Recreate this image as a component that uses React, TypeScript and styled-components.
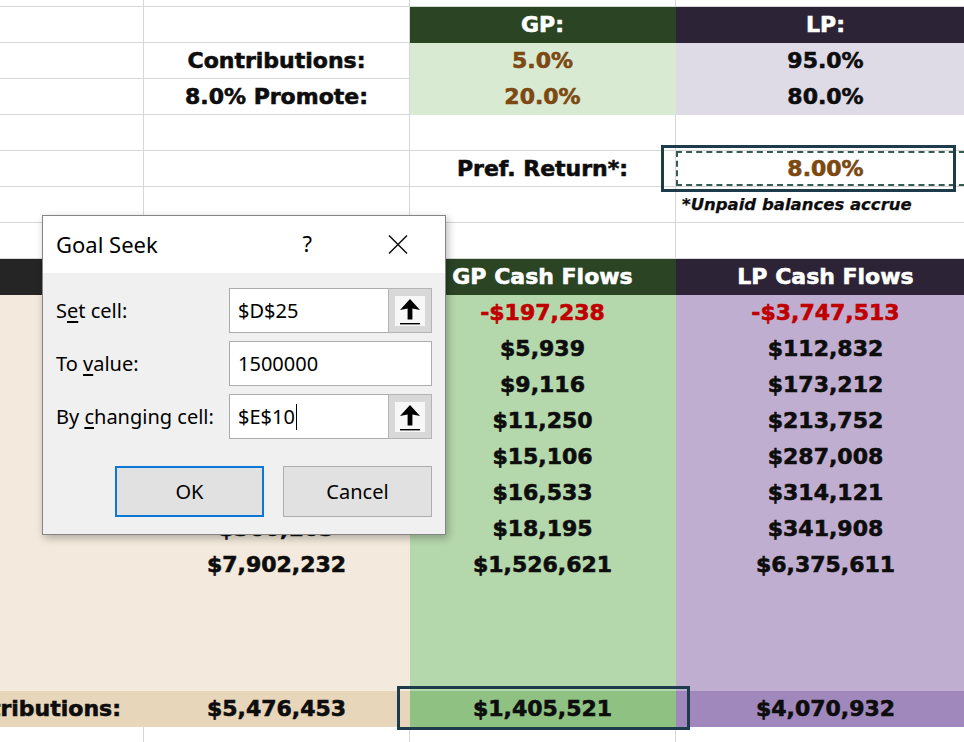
import React from 'react'
import styled, { createGlobalStyle } from 'styled-components'

const GlobalStyle = createGlobalStyle`
  html, body {
    margin: 0;
    padding: 0;
    background: #fff;
    overflow: hidden;
  }
`

type Fill =
  | 'none'
  | 'gpHead'
  | 'lpHead'
  | 'darkHead'
  | 'gpLight'
  | 'lpLight'
  | 'beige'
  | 'gp'
  | 'lp'
  | 'beigeTotal'
  | 'gpTotal'
  | 'lpTotal'

type Tone = 'dark' | 'light' | 'brown' | 'red'

const fills: Record<Fill, string> = {
  none: '#ffffff',
  gpHead: '#2a4424',
  lpHead: '#2c2337',
  darkHead: '#252525',
  gpLight: '#d9ead3',
  lpLight: '#dedae6',
  beige: '#f3e9dc',
  gp: '#b5d7ac',
  lp: '#bfaecf',
  beigeTotal: '#e8d6bb',
  gpTotal: '#8fc282',
  lpTotal: '#a088bc',
}

const tones: Record<Tone, string> = {
  dark: '#0d0d0d',
  light: '#ffffff',
  brown: '#7c4912',
  red: '#c00000',
}

interface ICell {
  text?: string
  fill?: Fill
  tone?: Tone
  align?: 'center' | 'left' | 'right'
  note?: boolean
  marquee?: boolean
  boxed?: 'pref' | 'total'
}

const blank: ICell = {}

// one entry per sheet row, columns A..D
const rows: ICell[][] = [
  [blank, blank, blank, blank],
  [blank, blank, { text: 'GP:', fill: 'gpHead', tone: 'light' }, { text: 'LP:', fill: 'lpHead', tone: 'light' }],
  [blank, { text: 'Contributions:' }, { text: '5.0%', fill: 'gpLight', tone: 'brown' }, { text: '95.0%', fill: 'lpLight' }],
  [blank, { text: '8.0% Promote:' }, { text: '20.0%', fill: 'gpLight', tone: 'brown' }, { text: '80.0%', fill: 'lpLight' }],
  [blank, blank, blank, blank],
  [blank, blank, { text: 'Pref. Return*:' }, { text: '8.00%', tone: 'brown', marquee: true, boxed: 'pref' }],
  [blank, blank, blank, { text: '*Unpaid balances accrue', align: 'left', note: true }],
  [blank, blank, blank, blank],
  [
    { fill: 'darkHead' },
    { fill: 'darkHead' },
    { text: 'GP Cash Flows', fill: 'gpHead', tone: 'light' },
    { text: 'LP Cash Flows', fill: 'lpHead', tone: 'light' },
  ],
]

// totals column B is hidden behind the dialog except for the last two rows
const flows: [string, string, string][] = [
  ['', '-$197,238', '-$3,747,513'],
  ['', '$5,939', '$112,832'],
  ['', '$9,116', '$173,212'],
  ['', '$11,250', '$213,752'],
  ['', '$15,106', '$287,008'],
  ['', '$16,533', '$314,121'],
  ['$360,103', '$18,195', '$341,908'],
  ['$7,902,232', '$1,526,621', '$6,375,611'],
]

flows.forEach(([total, gp, lp]) => {
  const tone: Tone = gp.startsWith('-') ? 'red' : 'dark'
  rows.push([
    { fill: 'beige' },
    { text: total, fill: 'beige', tone },
    { text: gp, fill: 'gp', tone },
    { text: lp, fill: 'lp', tone },
  ])
})

for (let i = 0; i < 3; i++) {
  rows.push([{ fill: 'beige' }, { fill: 'beige' }, { fill: 'gp' }, { fill: 'lp' }])
}

rows.push([
  { text: 'Total Distributions:', fill: 'beigeTotal', align: 'right' },
  { text: '$5,476,453', fill: 'beigeTotal' },
  { text: '$1,405,521', fill: 'gpTotal', boxed: 'total' },
  { text: '$4,070,932', fill: 'lpTotal' },
])
rows.push([blank, blank, blank, blank])

const App = (): JSX.Element => {
  return (
    <Page>
      <GlobalStyle />
      <Sheet>
        {rows.map((row, r) => (
          <Row key={r}>
            {row.map((cell, c) => {
              const fill = cell.fill ?? 'none'
              return (
                <Cell
                  key={c}
                  $fill={fills[fill]}
                  $lined={fill === 'none'}
                  $tone={tones[cell.tone ?? 'dark']}
                  $align={cell.align ?? 'center'}
                  $note={!!cell.note}>
                  {cell.text}
                  {cell.marquee && <Marquee />}
                  {cell.boxed && <Callout $kind={cell.boxed} />}
                </Cell>
              )
            })}
          </Row>
        ))}
      </Sheet>
      <GoalSeek />
    </Page>
  )
}

export default App

const Page = styled.div`
  position: relative;
  width: 964px;
  height: 742px;
  overflow: hidden;
  background: #fff;
`

const Sheet = styled.div`
  margin-top: -29px;
  width: 976px;
`

const Row = styled.div`
  display: grid;
  grid-template-columns: 144px 266px 266px 300px;
  height: 36px;
`

const Cell = styled.div<{ $fill: string; $lined: boolean; $tone: string; $align: string; $note: boolean }>`
  position: relative;
  box-sizing: border-box;
  display: flex;
  align-items: center;
  justify-content: ${({ $align }) =>
    $align === 'left' ? 'flex-start' : $align === 'right' ? 'flex-end' : 'center'};
  padding: ${({ $align }) => ($align === 'left' ? '0 0 0 6px' : $align === 'right' ? '0 22px 0 0' : '0')};
  background: ${({ $fill }) => $fill};
  border-right: 1px solid ${({ $lined }) => ($lined ? '#d6d6d6' : 'transparent')};
  border-bottom: 1px solid ${({ $lined }) => ($lined ? '#d6d6d6' : 'transparent')};
  white-space: nowrap;

  font-family: 'DejaVu Sans', 'Liberation Sans', sans-serif;
  font-weight: 700;
  font-size: ${({ $note }) => ($note ? '16.5px' : '22px')};
  font-style: ${({ $note }) => ($note ? 'italic' : 'normal')};
  color: ${({ $tone }) => $tone};
  -webkit-text-stroke: ${({ $note }) => ($note ? '0.25px' : '0.6px')} currentColor;
`

const Marquee = styled.div`
  position: absolute;
  inset: 0;
  border: 2px dashed #355d50;
  pointer-events: none;
`

const Callout = styled.div<{ $kind: 'pref' | 'total' }>`
  position: absolute;
  z-index: 2;
  box-sizing: border-box;
  border: 3px solid #1d3b4b;
  left: ${({ $kind }) => ($kind === 'pref' ? '-15px' : '-13px')};
  top: ${({ $kind }) => ($kind === 'pref' ? '-6px' : '-5px')};
  width: ${({ $kind }) => ($kind === 'pref' ? '295px' : '293px')};
  height: ${({ $kind }) => ($kind === 'pref' ? '47px' : '44px')};
`

/* ---------- Goal Seek dialog ---------- */

const GoalSeek = (): JSX.Element => {
  return (
    <Dialog>
      <TitleBar>
        <Title>Goal Seek</Title>
        <Help>?</Help>
        <svg width="20" height="19" viewBox="0 0 20 19">
          <path d="M1 0.5 L19 18.5 M19 0.5 L1 18.5" stroke="#111" strokeWidth="1.5" fill="none" />
        </svg>
      </TitleBar>
      <Body>
        <Form>
          <Label>S<u>e</u>t cell:</Label>
          <Field>
            <FieldText>$D$25</FieldText>
            <RefButton>
              <RefFace>
                <CollapseArrow />
              </RefFace>
            </RefButton>
          </Field>

          <Label>To <u>v</u>alue:</Label>
          <Field>
            <FieldText>1500000</FieldText>
          </Field>

          <Label>By <u>c</u>hanging cell:</Label>
          <Field>
            <FieldText>
              $E$10<Caret />
            </FieldText>
            <RefButton>
              <RefFace>
                <CollapseArrow />
              </RefFace>
            </RefButton>
          </Field>
        </Form>
        <Actions>
          <ActionButton $focused>OK</ActionButton>
          <ActionButton>Cancel</ActionButton>
        </Actions>
      </Body>
    </Dialog>
  )
}

const CollapseArrow = (): JSX.Element => (
  <svg width="30" height="30" viewBox="0 0 30 30">
    <path d="M15 3 L5 14 L12.6 12.4 L12.6 23.5 L17.4 23.5 L17.4 12.4 L25 14 Z" fill="#000" />
    <rect x="5" y="27" width="20" height="1.4" fill="#000" />
  </svg>
)

const Dialog = styled.div`
  position: absolute;
  z-index: 10;
  left: 42px;
  top: 215px;
  width: 404px;
  box-sizing: border-box;
  border: 1px solid #858585;
  background: #f0f0f0;
  box-shadow: 2px 3px 8px rgba(0, 0, 0, 0.28);
  font-family: 'Noto Sans', 'Open Sans', sans-serif;
  color: #000;
`

const TitleBar = styled.div`
  display: flex;
  align-items: center;
  height: 57px;
  padding: 0 37px 0 13px;
  background: #fff;
`

const Title = styled.div`
  flex: 1;
  font-size: 22px;
  margin-top: -1px;
`

const Help = styled.div`
  font-size: 22px;
  margin-right: 76px;
  margin-top: -4px;
`

const Body = styled.div`
  padding: 15px 13px 17px 13px;
`

const Form = styled.div`
  display: grid;
  grid-template-columns: 173px 203px;
  row-gap: 8px;
  align-items: center;
`

const Label = styled.div`
  font-size: 20px;
  white-space: nowrap;

  u {
    text-underline-offset: 3px;
    text-decoration-thickness: 1.5px;
  }
`

const Field = styled.div`
  display: flex;
  height: 45px;
  box-sizing: border-box;
  border: 1px solid #acacac;
  background: #fff;
`

const FieldText = styled.div`
  flex: 1;
  display: flex;
  align-items: center;
  padding-left: 8px;
  font-size: 20px;
`

const Caret = styled.span`
  display: inline-block;
  width: 1px;
  height: 26px;
  margin-left: 1px;
  background: #000;
`

const RefButton = styled.div`
  width: 44px;
  margin: -1px -1px -1px 0;
  box-sizing: border-box;
  display: flex;
  align-items: center;
  justify-content: center;
  border: 1px solid #b4b4b4;
  background: #d8d8d8;
`

const RefFace = styled.div`
  width: 30px;
  height: 30px;
  background: #f7f7f7;
`

const Actions = styled.div`
  display: flex;
  justify-content: flex-end;
  gap: 19px;
  margin-top: 27px;
`

const ActionButton = styled.div<{ $focused?: boolean }>`
  width: 149px;
  height: 51px;
  box-sizing: border-box;
  display: flex;
  align-items: center;
  justify-content: center;
  background: #e1e1e1;
  border: ${({ $focused }) => ($focused ? '2px solid #0a78d4' : '1px solid #adadad')};
  font-size: 20px;
`
